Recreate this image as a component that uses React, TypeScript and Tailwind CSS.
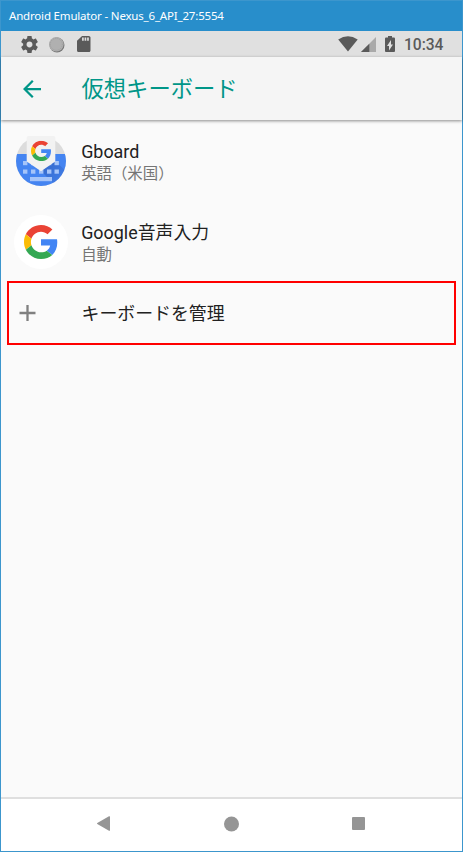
import React from "react";

function GoogleG(props: React.SVGProps<SVGSVGElement>) {
  return (
    <svg viewBox="0 0 48 48" {...props}>
      <path fill="#EA4335" d="M24 9.5c3.54 0 6.71 1.22 9.21 3.6l6.85-6.85C35.9 2.38 30.47 0 24 0 14.62 0 6.51 5.38 2.56 13.22l7.98 6.19C12.43 13.72 17.74 9.5 24 9.5z" />
      <path fill="#4285F4" d="M46.98 24.55c0-1.57-.15-3.09-.38-4.55H24v9.02h12.94c-.58 2.96-2.26 5.48-4.78 7.18l7.73 6c4.51-4.18 7.09-10.36 7.09-17.65z" />
      <path fill="#FBBC05" d="M10.53 28.59c-.48-1.45-.76-2.99-.76-4.59s.27-3.14.76-4.59l-7.98-6.19C.92 16.46 0 20.12 0 24c0 3.88.92 7.54 2.56 10.78l7.97-6.19z" />
      <path fill="#34A853" d="M24 48c6.48 0 11.93-2.13 15.89-5.81l-7.73-6c-2.15 1.45-4.92 2.3-8.16 2.3-6.26 0-11.57-4.22-13.47-9.91l-7.98 6.19C6.51 42.62 14.62 48 24 48z" />
    </svg>
  );
}

function GboardIcon() {
  const keys: [number, number][] = [
    [7, 25], [15, 25], [31, 25], [38.5, 25],
    [7, 33.5], [15, 33.5], [23, 33.5], [31, 33.5], [38.5, 33.5],
  ];
  return (
    <svg viewBox="0 0 50 50" className="h-[50px] w-[50px]">
      <defs>
        <clipPath id="disc"><circle cx="25" cy="25" r="25" /></clipPath>
        <linearGradient id="cast" x1="0" y1="0" x2="1" y2="1">
          <stop offset="0" stopColor="#1d3f8f" stopOpacity=".45" />
          <stop offset="1" stopColor="#1d3f8f" stopOpacity="0" />
        </linearGradient>
      </defs>
      <g clipPath="url(#disc)">
        <rect width="50" height="50" fill="#dcdcdc" />
        <rect y="18" width="50" height="32" fill="#4484f1" />
        <path d="M39 25l11 10v15H40L25 35z" fill="url(#cast)" />
        {keys.map(([x, y]) => (
          <rect key={`${x}-${y}`} x={x} y={y} width="4.4" height="4.2" fill="#a5c4f9" />
        ))}
        <rect x="14" y="41" width="22" height="4.2" fill="#a5c4f9" />
      </g>
      <path d="M12.5 0h25Q39.3 0 39.3 2v22.5q0 1-.8 1.6L25 35.3 11.5 26.1q-.8-.6-.8-1.6V2Q10.700 0 12.5 0z" fill="#f2f2f2" />
      <GoogleG x="15" y="4.700" width="20.400" height="20.400" />
    </svg>
  );
}

const title = "text-[17.9px] leading-[24px] text-[#212121]";
const summary = "text-[15.4px] leading-[20px] text-[#757575]";

export default function App() {
  return (
    <div className="flex h-[852px] w-[463px] flex-col border border-t-0 border-[#3c96cd] bg-[#fafafa] font-[Roboto,'Noto_Sans_CJK_JP',sans-serif]">
      <header className="flex h-[31px] shrink-0 items-center border-t border-[#3c96cd] bg-[#288ecb] pl-2 font-['Noto_Sans','Open_Sans',sans-serif] text-[11.5px] tracking-[-0.18px] text-white">
        Android Emulator - Nexus_6_API_27:5554
      </header>

      <div className="flex h-[26px] shrink-0 items-center justify-between bg-[#e0e0e0] pr-[18.5px] pl-5 text-[#5a5a5a]">
        <div className="flex items-center gap-[10px]">
          <svg viewBox="2 2 20 20" className="h-[17px] w-[17px]" fill="currentColor">
            <path d="M19.43 12.98c.04-.32.07-.64.07-.98s-.03-.66-.07-.98l2.11-1.65c.19-.15.24-.42.12-.64l-2-3.46c-.12-.22-.39-.3-.61-.22l-2.49 1c-.52-.4-1.080-.73-1.690-.98l-.38-2.650C14.460 2.180 14.250 2 14 2h-4c-.25 0-.46.18-.49.42l-.38 2.650c-.61.25-1.170.59-1.690.98l-2.490-1c-.23-.09-.49 0-.61.22l-2 3.460c-.13.22-.07.49.12.64l2.110 1.650c-.04.32-.07.65-.07.98s.03.66.07.98l-2.110 1.650c-.19.15-.24.42-.12.64l2 3.460c.12.22.39.3.61.22l2.490-1c.52.4 1.080.73 1.690.98l.38 2.650c.03.24.24.42.49.42h4c.25 0 .46-.18.49-.42l.38-2.650c.61-.25 1.170-.59 1.690-.98l2.490 1c.23.09.49 0 .61-.22l2-3.460c.12-.22.07-.49-.12-.64l-2.110-1.650zM12 15.500c-1.930 0-3.500-1.570-3.500-3.500s1.570-3.500 3.500-3.500 3.500 1.570 3.500 3.500-1.570 3.500-3.500 3.500z" />
          </svg>
          <svg viewBox="0 0 17 17" className="h-[17px] w-[17px]">
            <circle cx="9" cy="9" r="7.500" fill="#777" />
            <circle cx="8.300" cy="8.300" r="7.300" fill="#b0b0b0" />
            <circle cx="8.300" cy="8.300" r="6" fill="none" stroke="#959595" strokeDasharray="1 1" strokeWidth=".7" />
          </svg>
          <svg viewBox="4 2 16 20" className="ml-[2px] h-4 w-[13.5px]" preserveAspectRatio="none" fill="currentColor">
            <path d="M18 2h-8L4.020 8 4 20c0 1.100.9 2 2 2h12c1.100 0 2-.9 2-2V4c0-1.100-.9-2-2-2zm-6 6h-2V4h2v4zm3 0h-2V4h2v4zm3 0h-2V4h2v4z" />
          </svg>
        </div>
        <div className="flex items-center">
          <svg viewBox="0 0 20 16" className="h-4 w-5" fill="currentColor">
            <path d="M.2 3.500Q10-3 19.700 3.500L10 15.600z" />
          </svg>
          <svg viewBox="0 0 15 15" className="ml-[3px] h-[15px] w-[15px]">
            <path d="M15 0v15H0z" fill="#aaa" />
            <path d="M8.300 6.700V15H0z" fill="#5a5a5a" />
          </svg>
          <svg viewBox="7 2 10 20" className="ml-[9px] h-4 w-[10px]" preserveAspectRatio="none" fill="currentColor">
            <path d="M15.670 4H14V2h-4v2H8.330C7.600 4 7 4.600 7 5.330v15.330C7 21.400 7.600 22 8.330 22h7.330c.74 0 1.340-.6 1.340-1.330V5.330C17 4.600 16.400 4 15.670 4zM11 20v-5.500H9L13 7v5.500h2L11 20z" />
          </svg>
          <span className="ml-[9px] pt-[2px] text-[15.6px] leading-[24px] font-medium">10:34</span>
        </div>
      </div>

      <div className="z-10 flex h-[63px] shrink-0 items-center bg-[#f5f5f5] pl-[22px] text-[#009688] shadow-[0_1px_3px_rgba(0,0,0,0.45)]">
        <svg viewBox="4 4 16 16" className="h-[18px] w-[18px]" fill="currentColor">
          <path d="M20 11H7.830l5.590-5.590L12 4l-8 8 8 8 1.410-1.410L7.830 13H20v-2z" />
        </svg>
        <h1 className="ml-[40.5px] text-[22.3px] leading-8">仮想キーボード</h1>
      </div>

      <main className="flex grow flex-col">
        <div className="flex h-[82px] items-center pl-[15px]">
          <GboardIcon />
          <div className="ml-[15.2px] flex flex-col pt-[2px]">
            <span className={title}>Gboard</span>
            <span className={summary}>英語（米国）</span>
          </div>
        </div>
        <div className="flex h-[79px] items-center pl-[13px]">
          <div className="flex h-[54px] w-[54px] items-center justify-center rounded-full bg-white">
            <GoogleG className="h-[34px] w-[34px]" />
          </div>
          <div className="ml-[13.2px] flex flex-col pt-[2px]">
            <span className={title}>Google音声入力</span>
            <span className={summary}>自動</span>
          </div>
        </div>
        <div className="mx-[6px] flex h-16 items-center border-2 border-[#ff0000] pl-[10px]">
          <svg viewBox="0 0 17 16" className="h-4 w-[17px]">
            <path d="M.5 8h16M8.500 0v16" stroke="#808080" strokeWidth="2.300" />
          </svg>
          <span className={`ml-[45.500px] pt-[2px] ${title}`}>キーボードを管理</span>
        </div>
      </main>

      <nav className="flex h-[54px] shrink-0 items-center justify-between border-t-2 border-[#dfdfdf] bg-white pr-[97px] pb-[3px] pl-[96px]">
        <svg viewBox="0 0 13 15" className="h-[15px] w-[13px]" fill="#959595">
          <path d="M12 .3q1-.5 1 .5v13.400q0 1-1 .5L.3 8q-.6-.5 0-1z" />
        </svg>
        <svg viewBox="0 0 16 16" className="h-4 w-4" fill="#959595">
          <circle cx="8.500" cy="8" r="7.500" />
        </svg>
        <div className="h-[13.500px] w-[13.500px] rounded-[1px] bg-[#959595]" />
      </nav>
    </div>
  );
}
